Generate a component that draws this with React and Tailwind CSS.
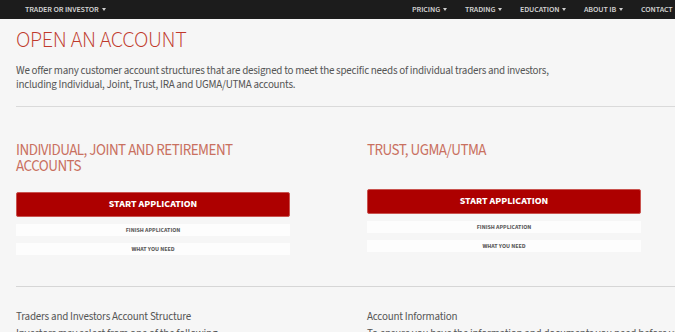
import React from "react";

const Caret = () => (
  <span className="inline-block ml-[3px] border-x-[2.5px] border-x-transparent border-t-[3px] border-t-[#cfcfcf]" />
);

function NavItem({ label, caret = true, w = "" }) {
  return (
    <span className={`flex items-center shrink-0 text-[8px] font-semibold uppercase text-[#d2d2d2] tracking-[-0.1px] whitespace-nowrap ${w}`}>
      {label}
      {caret && <Caret />}
    </span>
  );
}

function Buttons({ mt }) {
  return (
    <div className={`w-[274px] ${mt}`}>
      <div className="h-[25px] bg-[#ad0000] rounded-[2px] border border-[#c9534f] flex items-center justify-center text-white text-[10px] font-bold">
        START APPLICATION
      </div>
      <div className="mt-[7px] h-[12px] bg-[#fdfdfd] flex items-center justify-center text-[6px] font-bold text-[#5a5a5a] uppercase">
        Finish Application
      </div>
      <div className="mt-[7px] h-[12px] bg-[#fdfdfd] flex items-center justify-center text-[6px] font-bold text-[#5a5a5a] uppercase">
        What You Need
      </div>
    </div>
  );
}

export default function App() {
  return (
    <div className="w-[675px] h-[332px] overflow-hidden bg-[#f6f6f6] font-['Source_Sans_3','Source_Sans_Pro',sans-serif]">
      <div className="h-[19px] bg-[#1c1c1c] flex items-center">
        <div className="pl-[25px]">
          <NavItem label="Trader or Investor" />
        </div>
        <div className="ml-auto w-[263px] overflow-hidden flex items-center">
          <NavItem label="Pricing" w="w-[53px]" />
          <NavItem label="Trading" w="w-[55px]" />
          <NavItem label="Education" w="w-[64px]" />
          <NavItem label="About IB" w="w-[57px]" />
          <NavItem label="Contact" caret={false} />
        </div>
      </div>
      <div className="pl-[16px]">
        <h1 className="mt-[7px] text-[22px] leading-[28px] font-light tracking-[-0.3px] text-[#c0392b]">OPEN AN ACCOUNT</h1>
        <p className="mt-[10px] text-[11px] leading-[14px] tracking-[-0.25px] text-[#555] whitespace-nowrap">
          We offer many customer account structures that are designed to meet the specific needs of individual traders and investors,
          <br />
          including Individual, Joint, Trust, IRA and UGMA/UTMA accounts.
        </p>
        <div className="mt-[14px] h-px bg-[#dadada]" />
        <div className="flex mt-[36px]">
          <div className="w-[351px] shrink-0">
            <h2 className="text-[#c9705f] text-[15px] leading-[16px] tracking-[-0.5px] font-normal uppercase">
              Individual, Joint and Retirement
              <br />
              Accounts
            </h2>
            <Buttons mt="mt-[17px]" />
          </div>
          <div className="w-[351px] shrink-0">
            <h2 className="text-[#c9705f] text-[15px] leading-[16px] tracking-[-0.5px] font-normal uppercase">Trust, UGMA/UTMA</h2>
            <Buttons mt="mt-[30px]" />
          </div>
        </div>
        <div className="mt-[31px] h-px bg-[#d6d6d6]" />
        <div className="flex mt-[23px] text-[11px] leading-[14px] tracking-[-0.2px] text-[#555]">
          <div className="w-[351px] shrink-0">
            <p>Traders and Investors Account Structure</p>
            <p className="mt-[3px] whitespace-nowrap">Investors may select from one of the following</p>
          </div>
          <div className="w-[351px] shrink-0">
            <p>Account Information</p>
            <p className="mt-[3px] whitespace-nowrap">To ensure you have the information and documents you need before you start</p>
          </div>
        </div>
      </div>
    </div>
  );
}
